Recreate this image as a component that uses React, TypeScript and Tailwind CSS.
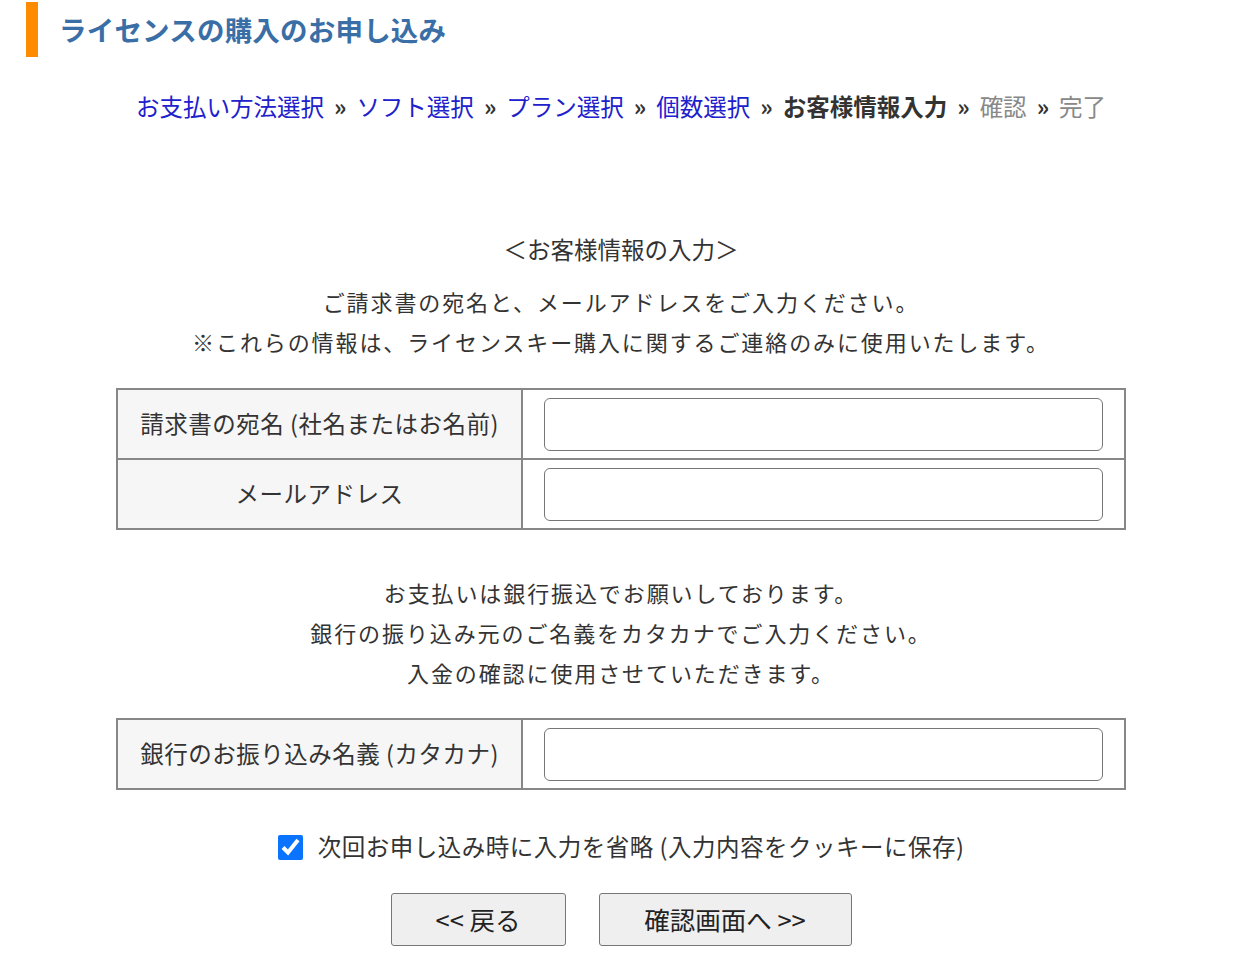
const jp = { fontFamily: '"Noto Sans CJK JP", "Noto Sans", sans-serif' };

function Sep() {
  return <span className="mx-[10px] font-bold text-[#333]">»</span>;
}

function FieldTable({ rows }: { rows: string[] }) {
  return (
    <table className="w-[1010px] border-collapse border-2 border-[#878787]">
      <tbody>
        {rows.map((label) => (
          <tr key={label} className="h-[70px]">
            <td className="w-[405px] border-2 border-[#878787] bg-[#f6f6f6] text-center text-[23.5px] tracking-[0.5px] text-[#333]">
              {label}
            </td>
            <td className="border-2 border-[#878787] px-[21px]">
              <input
                type="text"
                className="block h-[53px] w-full rounded-[6px] border-[1.5px] border-[#767676] bg-white px-2 outline-none"
              />
            </td>
          </tr>
        ))}
      </tbody>
    </table>
  );
}

export default function App() {
  return (
    <div className="min-h-[974px] bg-white pt-[2px] text-[#333]" style={jp}>
      <div className="ml-[26px] flex h-[55px] items-center border-l-[12px] border-[#ff8c00] pl-[21px]">
        <h1 className="text-[27.5px] font-bold leading-none tracking-[0.2px] text-[#3a6ea6]">
          ライセンスの購入のお申し込み
        </h1>
      </div>

      <div className="ml-[116px] w-[1010px]">
        <div className="mt-[29px] text-center text-[23.5px] leading-[40px]">
          <a className="text-[#2020cc]">お支払い方法選択</a>
          <Sep />
          <a className="text-[#2020cc]">ソフト選択</a>
          <Sep />
          <a className="text-[#2020cc]">プラン選択</a>
          <Sep />
          <a className="text-[#2020cc]">個数選択</a>
          <Sep />
          <span className="font-bold text-[#333]">お客様情報入力</span>
          <Sep />
          <span className="text-[#888]">確認</span>
          <Sep />
          <span className="text-[#888]">完了</span>
        </div>

        <p className="mt-[103px] text-center text-[23.5px] leading-[40px]">＜お客様情報の入力＞</p>

        <div className="mt-[12px] text-center text-[22px] leading-[40px] tracking-[1.9px]">
          <p>ご請求書の宛名と、メールアドレスをご入力ください。</p>
          <p>※これらの情報は、ライセンスキー購入に関するご連絡のみに使用いたします。</p>
        </div>

        <div className="mt-[27px]">
          <FieldTable rows={["請求書の宛名 (社名またはお名前)", "メールアドレス"]} />
        </div>

        <div className="mt-[42px] text-center text-[22px] leading-[40px] tracking-[1.9px]">
          <p>お支払いは銀行振込でお願いしております。</p>
          <p>銀行の振り込み元のご名義をカタカナでご入力ください。</p>
          <p>入金の確認に使用させていただきます。</p>
        </div>

        <div className="mt-[26px]">
          <FieldTable rows={["銀行のお振り込み名義 (カタカナ)"]} />
        </div>

        <label className="mt-[37px] flex h-[40px] items-center justify-center gap-[15px] text-[23.5px] tracking-[0.5px]">
          <input
            type="checkbox"
            defaultChecked
            className="h-[25px] w-[25px] accent-[#0b74fe]"
          />
          <span>次回お申し込み時に入力を省略 (入力内容をクッキーに保存)</span>
        </label>

        <div className="mt-[26px] flex justify-center gap-[33px]">
          <button className="h-[53px] w-[175px] rounded-[3px] border-[1.5px] border-[#767676] bg-[#efefef] text-[25.5px] text-[#222]">
            &lt;&lt; 戻る
          </button>
          <button className="h-[53px] w-[253px] rounded-[3px] border-[1.5px] border-[#767676] bg-[#efefef] text-[25.5px] text-[#222]">
            確認画面へ &gt;&gt;
          </button>
        </div>
      </div>
    </div>
  );
}
